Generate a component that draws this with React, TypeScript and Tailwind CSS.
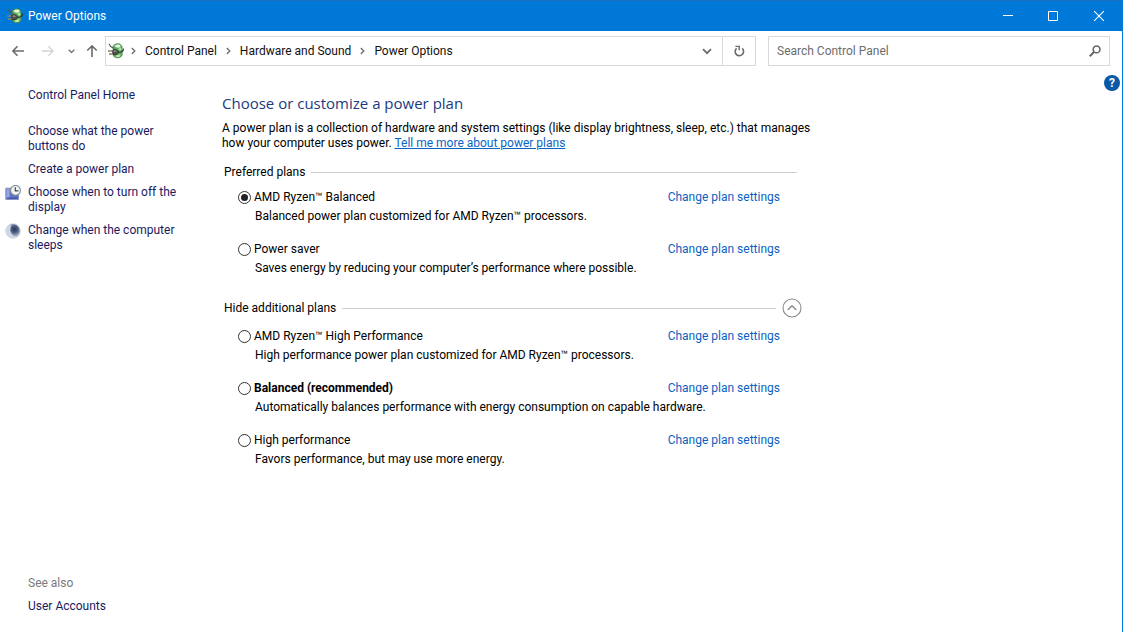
import { useState } from 'react';

const tasks = [
  { label: 'Choose what the power buttons do', icon: null },
  { label: 'Create a power plan', icon: null },
  { label: 'Choose when to turn off the display', icon: 'display' },
  { label: 'Change when the computer sleeps', icon: 'sleep' },
];

const preferredPlans = [
  {
    id: 'ryzen-balanced',
    name: 'AMD Ryzen™ Balanced',
    description: 'Balanced power plan customized for AMD Ryzen™ processors.',
    recommended: false,
  },
  {
    id: 'power-saver',
    name: 'Power saver',
    description: 'Saves energy by reducing your computer’s performance where possible.',
    recommended: false,
  },
];

const additionalPlans = [
  {
    id: 'ryzen-high',
    name: 'AMD Ryzen™ High Performance',
    description: 'High performance power plan customized for AMD Ryzen™ processors.',
    recommended: false,
  },
  {
    id: 'balanced',
    name: 'Balanced (recommended)',
    description: 'Automatically balances performance with energy consumption on capable hardware.',
    recommended: true,
  },
  {
    id: 'high',
    name: 'High performance',
    description: 'Favors performance, but may use more energy.',
    recommended: false,
  },
];

// Battery with a plug in front of it
const PowerIcon = () => (
  <svg width="16" height="16" viewBox="0 0 16 16" className="shrink-0">
    <path d="M5 3.4 Q6 1.2 8.6 .8 Q12 .4 12.6 1.6 L14 3.4 L14.2 12.4 Q12 15.6 8 14.8 L5.4 13 Z" fill="#5fae62" stroke="#3c7a48" strokeWidth=".7" />
    <path d="M6.4 3 Q9 .9 12.4 2 Q13 4.2 10.4 4.8 Q8 5 6.4 3 Z" fill="#e2f7dc" />
    <path d="M10.5 5.4 L13.2 4.6 L13.4 7.2 L11.4 7.4 Z M7.4 12.6 L12.6 11.2 L12 13.8 L8.6 14.2 Z" fill="#b4e8aa" />
    <path d="M1 1 Q2.5 4.5 6 5.5" fill="none" stroke="#555" strokeWidth="1.1" />
    <path d="M4.5 7.6 Q6.6 5.6 8.8 7 L10.6 8.6 L10.6 9.8 L8.8 11.4 Q6.6 12.4 4.8 11.2 Z" fill="#55504c" stroke="#1d1d1d" strokeWidth=".7" />
    <path d="M5.8 8.4 Q7.2 7.2 8.4 8.4" fill="none" stroke="#c0b9b2" strokeWidth=".9" />
    <path d="M0 8 H4.5 M1 11 H4.8" stroke="#8a7f62" strokeWidth="1.3" />
    <path d="M10.6 9.2 Q15.4 9.8 15.4 5.5" fill="none" stroke="#2b3a2c" strokeWidth="1.2" />
  </svg>
);

const DisplayIcon = () => (
  <svg width="16" height="16" viewBox="0 0 16 16">
    <path d="M.8 3.2 H13.5 V14.5 H.8 Z" fill="#5f72c6" stroke="#8a94c4" />
    <path d="M1.5 4 H4.5 V14 H1.5 Z" fill="#98a6e0" />
    <path d="M2 12.5 H13 V14 H2 Z" fill="#4357ad" />
    <circle cx="10.5" cy="5.4" r="4.9" fill="#f1f3f2" stroke="#828b90" strokeWidth="1.1" />
    <path d="M10.3 2.2 V5.9 H13.4" fill="none" stroke="#3b4650" strokeWidth="1.2" />
  </svg>
);

const SleepIcon = () => (
  <svg width="16" height="16" viewBox="0 0 16 16">
    <defs>
      <radialGradient id="moon" cx="60%" cy="38%" r="58%">
        <stop offset="0" stopColor="#2a3a60" />
        <stop offset=".4" stopColor="#4d5d80" />
        <stop offset="1" stopColor="#d5deea" />
      </radialGradient>
    </defs>
    <circle cx="8" cy="8" r="7.3" fill="url(#moon)" stroke="#ccd4df" strokeWidth=".8" />
    <path d="M3.6 2.6 A7 7 0 0 0 11.5 14 Q7 13 5.6 9 Q4.6 5.6 6.5 2 Q4.8 1.8 3.6 2.6 Z" fill="#ccd7e8" />
  </svg>
);

const Chevron = () => (
  <svg width="5" height="8" viewBox="0 0 5 8" className="shrink-0">
    <path d="M.8 1 L3.8 4 L.8 7" fill="none" stroke="#6b6b6b" strokeWidth="1.3" />
  </svg>
);

const TitleBar = () => (
  <header className="flex h-[31px] items-center border-t border-[#1a6fc0] bg-[#0078d7] pl-[7px] text-white">
    <PowerIcon />
    <h1 className="ml-[5px] flex-1">Power Options</h1>
    <button aria-label="Minimize" className="flex h-full w-[45px] items-center justify-center">
      <svg width="10" height="10" viewBox="0 0 10 10">
        <path d="M0 4.5 H10" stroke="currentColor" />
      </svg>
    </button>
    <button aria-label="Maximize" className="flex h-full w-[45px] items-center justify-center">
      <svg width="10" height="10" viewBox="0 0 10 10">
        <path d="M.5 .5 H9.5 V9.5 H.5 Z" fill="none" stroke="currentColor" />
      </svg>
    </button>
    <button aria-label="Close" className="flex h-full w-[47px] items-center justify-center">
      <svg width="10" height="10" viewBox="0 0 10 10">
        <path d="M0 0 L10 10 M10 0 L0 10" fill="none" stroke="currentColor" strokeWidth="1.1" />
      </svg>
    </button>
  </header>
);

const Toolbar = () => (
  <div className="flex h-[30px] items-stretch pr-3">
    <nav aria-label="History" className="flex w-[105px] shrink-0 items-center pl-3">
      <button aria-label="Back">
        <svg width="12" height="12" viewBox="0 0 12 12">
          <path d="M12 6 H1 M5.5 1.3 L.9 6 L5.5 10.7" fill="none" stroke="#6b6b6b" strokeWidth="1.6" />
        </svg>
      </button>
      <button aria-label="Forward" className="ml-[18px]">
        <svg width="12" height="12" viewBox="0 0 12 12">
          <path d="M0 6 H11 M6.5 1.3 L11.1 6 L6.5 10.7" fill="none" stroke="#d4d4d4" strokeWidth="1.4" />
        </svg>
      </button>
      <button aria-label="Recent locations" className="ml-3.5">
        <svg width="7" height="5" viewBox="0 0 7 5">
          <path d="M.7 .8 L3.5 3.6 L6.3 .8" fill="none" stroke="#777" strokeWidth="1.4" />
        </svg>
      </button>
      <button aria-label="Up" className="ml-[11px]">
        <svg width="12" height="12" viewBox="0 0 12 12">
          <path d="M6 12 V1 M1.3 5.5 L6 .9 L10.7 5.5" fill="none" stroke="#6b6b6b" strokeWidth="1.6" />
        </svg>
      </button>
    </nav>

    <div className="flex flex-1 items-stretch border border-[#d9d9d9]">
      <nav aria-label="Location" className="flex flex-1 items-center gap-[9px] pl-0.5 text-[#111]">
        <div className="flex items-center gap-[7px]">
          <PowerIcon />
          <Chevron />
        </div>
        <a href="#">Control Panel</a>
        <Chevron />
        <a href="#">Hardware and Sound</a>
        <Chevron />
        <a href="#">Power Options</a>
      </nav>
      <button aria-label="Previous locations" className="flex w-[31px] items-center justify-center">
        <svg width="10" height="7" viewBox="0 0 10 7">
          <path d="M1 1.2 L5 5.2 L9 1.2" fill="none" stroke="#6b6b6b" strokeWidth="1.8" />
        </svg>
      </button>
      <button aria-label="Refresh" className="flex w-[33px] items-center justify-center border-l border-[#d9d9d9]">
        <svg width="12" height="12" viewBox="0 0 12 12">
          <path d="M9.2 3.4 A4.2 4.2 0 1 1 3.6 3.3" fill="none" stroke="#6b6b6b" strokeWidth="1.6" />
          <path d="M2.4 1.4 H6.2 V5.2" fill="none" stroke="#6b6b6b" strokeWidth="1.4" />
        </svg>
      </button>
    </div>

    <form className="ml-3 flex w-[342px] shrink-0 items-center border border-[#d9d9d9] pr-2 pl-2">
      <input
        type="text"
        aria-label="Search Control Panel"
        placeholder="Search Control Panel"
        className="min-w-0 flex-1 bg-transparent outline-none placeholder:text-[#6d6d6d]"
      />
      <button type="button" aria-label="Search">
        <svg width="12" height="12" viewBox="0 0 12 12">
          <circle cx="7.6" cy="4.4" r="3.4" fill="none" stroke="#666" strokeWidth="1.6" />
          <path d="M5.2 6.8 L.8 11.2" stroke="#666" strokeWidth="2" />
        </svg>
      </button>
    </form>
  </div>
);

const Sidebar = () => (
  <aside className="flex w-[222px] shrink-0 flex-col pt-[22px] pb-[18px] text-[#1a1a5e]">
    <a href="#" className="ml-7">Control Panel Home</a>
    <ul className="mt-[21px] flex flex-col gap-2">
      {tasks.map((task) => (
        <li key={task.label} className="flex pl-[5px]">
          <span className="w-[23px] shrink-0">
            {task.icon === 'display' && <DisplayIcon />}
            {task.icon === 'sleep' && <SleepIcon />}
          </span>
          <a href="#" className="w-[156px]">{task.label}</a>
        </li>
      ))}
    </ul>
    <div className="mt-auto ml-7 flex flex-col gap-2">
      <h2 className="text-[#7a7a7a]">See also</h2>
      <a href="#">User Accounts</a>
    </div>
  </aside>
);

const PlanRow = ({ plan, checked, onSelect }) => (
  <li className="grid grid-cols-[1fr_auto] pr-[22px] pl-4 leading-[19px]">
    <label htmlFor={plan.id} className={plan.recommended ? 'flex items-center gap-[3px] font-bold' : 'flex items-center gap-[3px]'}>
      <input
        type="radio"
        name="plan"
        id={plan.id}
        checked={checked}
        onChange={() => onSelect(plan.id)}
        className="flex size-[13px] appearance-none items-center justify-center rounded-full border border-[#333] bg-white before:size-[7px] before:rounded-full checked:before:bg-[#222]"
      />
      {plan.name}
    </label>
    <a href="#" className="text-[#0b5fc0]">Change plan settings</a>
    <p className="col-span-2 pl-[17px]">{plan.description}</p>
  </li>
);

export default function App() {
  const [selected, setSelected] = useState('ryzen-balanced');
  const [showMore, setShowMore] = useState(true);

  return (
    <div className="flex min-h-screen flex-col border-r border-[#0078d7] bg-white font-[Roboto,'Open_Sans',sans-serif] text-[12px] leading-[15px] text-black">
      <TitleBar />
      <div className="pt-[5px]">
        <Toolbar />
      </div>

      <div className="flex flex-1">
        <Sidebar />
        <main className="max-w-[600px] flex-1 pt-[25px]">
          <h2 className="font-['Open_Sans',sans-serif] text-[15px] leading-6 text-[#1a3a80]">Choose or customize a power plan</h2>
          <p className="mt-1.5">
            A power plan is a collection of hardware and system settings (like display brightness, sleep, etc.) that manages
            how your computer uses power.{' '}
            <a href="#" className="text-[#0b64c4] underline">Tell me more about power plans</a>
          </p>

          <section className="mt-[11px] max-w-[580px]">
            <div className="flex h-5 items-center gap-1.5 pr-[5px] pl-0.5">
              <h3>Preferred plans</h3>
              <div className="h-px flex-1 bg-[#cfcfcf]"></div>
            </div>
            <ul className="mt-1.5 flex flex-col gap-3.5">
              {preferredPlans.map((plan) => (
                <PlanRow key={plan.id} plan={plan} checked={selected === plan.id} onSelect={setSelected} />
              ))}
            </ul>
          </section>

          <section className="mt-5 max-w-[580px]">
            <div className="flex h-5 items-center gap-1.5 pl-0.5">
              <h3>{showMore ? 'Hide additional plans' : 'Show additional plans'}</h3>
              <div className="h-px flex-1 bg-[#cfcfcf]"></div>
              <button aria-label="Toggle additional plans" aria-expanded={showMore} onClick={() => setShowMore(!showMore)}>
                <svg width="20" height="20" viewBox="0 0 20 20">
                  <circle cx="10" cy="10" r="9" fill="#fff" stroke="#8c8c8c" strokeWidth="1.1" />
                  <path d="M5.8 12 L10 7.8 L14.2 12" fill="none" stroke="#8c8c8c" strokeWidth="1.4" />
                </svg>
              </button>
            </div>
            {showMore && (
              <ul className="mt-[9px] flex flex-col gap-3.5">
                {additionalPlans.map((plan) => (
                  <PlanRow key={plan.id} plan={plan} checked={selected === plan.id} onSelect={setSelected} />
                ))}
              </ul>
            )}
          </section>
        </main>
        <div className="ml-auto pt-[9px] pr-0.5">
          <button aria-label="Help" className="flex size-4 items-center justify-center rounded-full bg-[#0a57a8] font-bold text-white">
            ?
          </button>
        </div>
      </div>
    </div>
  );
}
